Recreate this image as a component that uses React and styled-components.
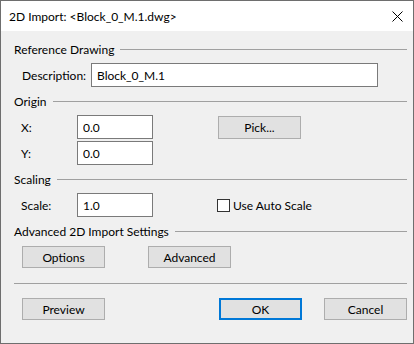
import React from "react";
import styled, { createGlobalStyle } from "styled-components";

const GlobalStyle = createGlobalStyle`
  body {
    margin: 0;
    background: #ffffff;
    font-family: Lato, "Noto Sans", "Liberation Sans", sans-serif;
    font-size: 12px;
    color: #000000;
  }
`;

const Window = styled.div`
  width: 414px;
  height: 344px;
  box-sizing: border-box;
  border: 1px solid #6e6e6e;
  display: flex;
  flex-direction: column;
  background: #f0f0f0;
`;

const TitleBar = styled.div`
  height: 30px;
  background: #ffffff;
  display: flex;
  align-items: center;
  padding: 0 10px 0 8px;
`;

const Title = styled.span`
  flex: 1;
  font-size: 12px;
`;

const Body = styled.div`
  flex: 1;
  padding: 10px 6px 0 13px;
  display: flex;
  flex-direction: column;
`;

const GroupHeader = styled.div`
  height: 16px;
  display: flex;
  align-items: center;
  gap: 6px;
  margin-top: ${(p) => p.$top || 0}px;
`;

const Rule = styled.div`
  flex: 1;
  height: 1px;
  background: #a0a0a0;
`;

const Row = styled.div`
  display: flex;
  align-items: center;
  padding-left: ${(p) => p.$indent || 8}px;
  margin-top: ${(p) => p.$top || 0}px;
`;

const Label = styled.span`
  width: ${(p) => p.$width}px;
`;

const Field = styled.input`
  box-sizing: border-box;
  width: ${(p) => p.$width}px;
  height: 24px;
  border: 1px solid #7a7a7a;
  background: #ffffff;
  padding: 0 5px;
  margin: 0;
  font: inherit;
  color: #000000;
  outline: none;
`;

const Button = styled.button`
  box-sizing: border-box;
  width: 83px;
  height: ${(p) => p.$height || 22}px;
  margin: 0 0 0 ${(p) => p.$left || 0}px;
  padding: 0;
  background: #e1e1e1;
  border: ${(p) => (p.$default ? "2px solid #0078d7" : "1px solid #adadad")};
  font: inherit;
  color: #000000;
`;

const CheckWrap = styled.label`
  display: flex;
  align-items: center;
  gap: 3px;
  margin-left: 64px;
`;

const CheckBox = styled.span`
  box-sizing: border-box;
  width: 13px;
  height: 13px;
  border: 1px solid #333333;
  background: #ffffff;
`;

const Separator = styled.div`
  height: 1px;
  background: #a0a0a0;
  margin-top: 15px;
`;

const Footer = styled.div`
  display: flex;
  align-items: center;
  padding-left: 8px;
  margin-top: 14px;
`;

const Spacer = styled.div`
  flex: 1;
`;

function CloseIcon() {
  return (
    <svg width="11" height="11" viewBox="0 0 11 11">
      <path d="M0.5 0.5 L10.5 10.5 M10.5 0.5 L0.5 10.5" stroke="#000" strokeWidth="1" fill="none" />
    </svg>
  );
}

function Header({ children, top }) {
  return (
    <GroupHeader $top={top}>
      <span>{children}</span>
      <Rule />
    </GroupHeader>
  );
}

export default function App() {
  return (
    <>
      <GlobalStyle />
      <Window>
        <TitleBar>
          <Title>2D Import: &lt;Block_0_M.1.dwg&gt;</Title>
          <CloseIcon />
        </TitleBar>
        <Body>
          <Header>Reference Drawing</Header>
          <Row $top={6}>
            <Label $width={69}>Description:</Label>
            <Field $width={287} defaultValue="Block_0_M.1" readOnly />
          </Row>

          <Header top={6}>Origin</Header>
          <Row $top={6} $indent={7}>
            <Label $width={56}>X:</Label>
            <Field $width={76} defaultValue="0.0" readOnly />
            <Button $left={65} $height={23}>Pick...</Button>
          </Row>
          <Row $top={2} $indent={7}>
            <Label $width={56}>Y:</Label>
            <Field $width={76} defaultValue="0.0" readOnly />
          </Row>

          <Header top={6}>Scaling</Header>
          <Row $top={6} $indent={7}>
            <Label $width={56}>Scale:</Label>
            <Field $width={76} defaultValue="1.0" readOnly />
            <CheckWrap>
              <CheckBox />
              <span>Use Auto Scale</span>
            </CheckWrap>
          </Row>

          <Header top={6}>Advanced 2D Import Settings</Header>
          <Row $top={7}>
            <Button>Options</Button>
            <Button $left={43}>Advanced</Button>
          </Row>

          <Separator />
          <Footer>
            <Button>Preview</Button>
            <Spacer />
            <Button $default>OK</Button>
            <Button $left={22}>Cancel</Button>
          </Footer>
        </Body>
      </Window>
    </>
  );
}
